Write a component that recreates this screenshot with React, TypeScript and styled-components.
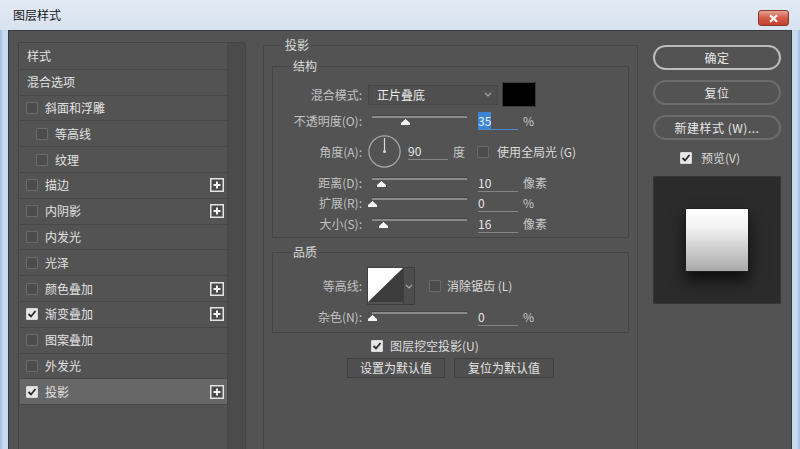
import React from "react";
import styled, { createGlobalStyle } from "styled-components";

const GlobalStyle = createGlobalStyle`
  html, body {
    margin: 0;
    padding: 0;
    background: #535353;
    overflow: hidden;
  }
  body {
    font-family: "Noto Sans CJK SC", "Noto Sans", sans-serif;
    font-size: 12px;
  }
`;

const Window = styled.div`
  width: 800px;
  height: 449px;
  display: flex;
  flex-direction: column;
  overflow: hidden;
  background: linear-gradient(90deg, #9fbbdc 0, #c6daf0 3px, #c6daf0 797px, #9fbbdc 800px);
`;

const TitleBar = styled.div`
  height: 30px;
  flex-shrink: 0;
  display: flex;
  align-items: flex-start;
  justify-content: space-between;
  padding: 0 11px 0 13px;
  background: linear-gradient(#e2eaf4, #d8e3f0);
`;

const Title = styled.span`
  margin-top: 7px;
  line-height: 16px;
  color: #151515;
  font-size: 12px;
`;

const CloseButton = styled.div`
  margin-top: 10px;
  width: 31px;
  height: 16px;
  box-sizing: border-box;
  border: 1px solid #84372c;
  border-radius: 3px;
  background: linear-gradient(#e8a394, #d4604c 45%, #c2402e);
  display: flex;
  align-items: center;
  justify-content: center;
`;

const Body = styled.div`
  flex: 1;
  min-height: 0;
  display: flex;
  margin: 0 8px;
  background: #535353;
  border: 1px solid #3b3b3b;
  border-bottom: none;
  padding: 11px 10px 0 9px;
`;

/* ---------- left style list ---------- */

const LeftPanel = styled.div`
  width: 228px;
  box-sizing: border-box;
  display: flex;
  border: 1px solid #444;
  border-bottom: none;
`;

const StyleList = styled.div`
  flex: 1;
  padding: 1px 0 0 1px;
  display: flex;
  flex-direction: column;
`;

const ScrollColumn = styled.div`
  width: 17px;
  background: #4b4b4b;
  border-left: 1px solid #464646;
`;

const StyleRow = styled.div<{ $indent?: boolean; $plain?: boolean; $active?: boolean }>`
  display: flex;
  align-items: center;
  height: 24.8px;
  border-bottom: 1px solid #474747;
  padding-left: ${(p) => (p.$plain ? 7 : p.$indent ? 16 : 6)}px;
  background: ${(p) => (p.$active ? "#676767" : "transparent")};
  color: #e2e2e2;
  line-height: 16px;
`;

const RowText = styled.span<{ $gap?: boolean }>`
  margin-left: ${(p) => (p.$gap ? 7 : 0)}px;
`;

const PlusBox = styled.span`
  margin-left: auto;
  margin-right: 3px;
  display: flex;
`;

/* ---------- shared bits ---------- */

const Box = styled.span<{ $checked?: boolean }>`
  width: 12px;
  height: 12px;
  box-sizing: border-box;
  flex-shrink: 0;
  border: 1px solid ${(p) => (p.$checked ? "#d6d6d6" : "#6a6a6a")};
  background: ${(p) => (p.$checked ? "#e6e6e6" : "#4c4c4c")};
  border-radius: 1px;
  display: inline-flex;
  align-items: center;
  justify-content: center;
`;

function Checkbox({ checked }: { checked?: boolean }) {
  return (
    <Box $checked={checked}>
      {checked && (
        <svg width="10" height="10" viewBox="0 0 10 10">
          <polyline points="1.5,5 4,7.5 8.5,2" fill="none" stroke="#2a2a2a" strokeWidth="1.8" />
        </svg>
      )}
    </Box>
  );
}

function PlusIcon() {
  return (
    <svg width="14" height="14" viewBox="0 0 14 14">
      <rect x="0.75" y="0.75" width="12.5" height="12.5" fill="#4a4a4a" stroke="#e4e4e4" strokeWidth="1.5" />
      <path d="M7 3.5v7M3.5 7h7" stroke="#f2f2f2" strokeWidth="2" />
    </svg>
  );
}

function Chevron() {
  return (
    <svg width="8" height="5" viewBox="0 0 8 5">
      <polyline points="1,1 4,4 7,1" fill="none" stroke="#a8a8a8" strokeWidth="1.1" />
    </svg>
  );
}

/* ---------- middle settings ---------- */

const MiddleCol = styled.div`
  width: 375px;
  margin-left: 17px;
  display: flex;
  flex-direction: column;
`;

const OuterGroup = styled.fieldset`
  flex: 1;
  min-width: 0;
  margin: -4px 0 0;
  padding: 7px 8px 0;
  border: 1px solid #454545;
  border-bottom: none;
`;

const Group = styled.fieldset<{ $mt?: number; $pb: number }>`
  min-width: 0;
  margin: ${(p) => p.$mt ?? 0}px 0 0;
  padding: 0 0 ${(p) => p.$pb}px;
  border: 1px solid #454545;
`;

const Legend = styled.legend<{ $ml: number }>`
  margin-left: ${(p) => p.$ml}px;
  padding: 0 2px;
  line-height: 14px;
  color: #dadada;
  font-size: 12px;
`;

const FieldRow = styled.div<{ $h: number; $mt?: number }>`
  display: flex;
  align-items: center;
  height: ${(p) => p.$h}px;
  margin-top: ${(p) => p.$mt ?? 0}px;
  line-height: 16px;
`;

const Label = styled.span`
  width: 89px;
  flex-shrink: 0;
  text-align: right;
  white-space: nowrap;
  color: #c2c2c2;
`;

const Select = styled.div`
  margin-left: 6px;
  width: 130px;
  height: 20px;
  box-sizing: border-box;
  border: 1px solid #464646;
  background: #4f4f4f;
  display: flex;
  align-items: center;
  justify-content: space-between;
  padding: 0 5px 0 8px;
  color: #ececec;
`;

const Swatch = styled.div`
  margin-left: 4px;
  width: 34px;
  height: 25px;
  box-sizing: border-box;
  background: #000;
  border: 1px solid #3a3a3a;
`;

const SliderWrap = styled.div`
  position: relative;
  margin-left: 10px;
  width: 95px;
  height: 20px;
  flex-shrink: 0;
`;

const Track = styled.div`
  position: absolute;
  left: 0;
  right: 0;
  top: 4px;
  height: 2px;
  background: #8a8a8a;
  border-top: 1px solid #454545;
`;

const Thumb = styled.svg`
  position: absolute;
  top: 7px;
`;

function Slider({ pos }: { pos: number }) {
  return (
    <SliderWrap>
      <Track />
      <Thumb width="11" height="8" viewBox="0 0 11 8" style={{ left: pos * 95 - 5.5 }}>
        <polygon points="5.5,0.5 10.5,5 10.5,7.5 0.5,7.5 0.5,5" fill="#f4f4f4" stroke="#222" strokeWidth="0.6" />
      </Thumb>
    </SliderWrap>
  );
}

const NumInput = styled.div<{ $focus?: boolean; $ml: number }>`
  margin-left: ${(p) => p.$ml}px;
  width: 40px;
  height: 16px;
  flex-shrink: 0;
  border-bottom: 1px solid ${(p) => (p.$focus ? "#4a88cf" : "#858585")};
  color: #e6e6e6;
  line-height: 16px;
`;

const Selected = styled.span`
  background: #3d84d2;
  color: #eaf3ff;
`;

const Unit = styled.span`
  margin-left: 5px;
  color: #c8c8c8;
`;

const Dial = styled.svg`
  margin-left: 6px;
  flex-shrink: 0;
`;

const CheckLabel = styled.span<{ $ml: number }>`
  margin-left: ${(p) => p.$ml}px;
  color: #dcdcdc;
  white-space: nowrap;
`;

const Spacer = styled.span<{ $w: number }>`
  width: ${(p) => p.$w}px;
  flex-shrink: 0;
`;

const ContourPicker = styled.div`
  margin-left: 5px;
  display: flex;
  height: 36px;
  border: 1px solid #3e3e3e;
`;

const ContourDrop = styled.div`
  width: 10px;
  background: #4d4d4d;
  border-left: 1px solid #3e3e3e;
  display: flex;
  align-items: center;
  justify-content: center;
`;

const KnockRow = styled.div`
  display: flex;
  align-items: center;
  height: 16px;
  margin-top: 5px;
  padding-left: 99px;
  line-height: 16px;
`;

const ButtonRow = styled.div`
  display: flex;
  justify-content: center;
  gap: 9px;
  margin-top: 4px;
`;

const FlatButton = styled.button<{ $w: number }>`
  width: ${(p) => p.$w}px;
  height: 20px;
  padding: 0;
  border: 1px solid #3f3f3f;
  background: #4f4f4f;
  color: #e4e4e4;
  font-family: inherit;
  font-size: 12px;
  line-height: 16px;
`;

/* ---------- right column ---------- */

const RightCol = styled.div`
  width: 128px;
  margin-left: 15px;
  padding-top: 3px;
  display: flex;
  flex-direction: column;
  gap: 10px;
`;

const PillButton = styled.button<{ $primary?: boolean }>`
  height: 25px;
  padding: 0;
  border-radius: 13px;
  border: ${(p) => (p.$primary ? "2px solid #bcbcbc" : "2px solid #6c6c6c")};
  background: #535353;
  color: #e8e8e8;
  font-family: inherit;
  font-size: 12px;
  letter-spacing: 0.5px;
`;

const PreviewRow = styled.div`
  display: flex;
  align-items: center;
  height: 16px;
  padding-left: 27px;
  line-height: 16px;
`;

const PreviewBox = styled.div`
  width: 128px;
  height: 128px;
  box-sizing: border-box;
  background: #2b2b2b;
  border: 1px solid #363636;
  display: flex;
  align-items: center;
  justify-content: center;
`;

const PreviewSquare = styled.div`
  width: 64px;
  height: 64px;
  box-sizing: border-box;
  border: 1px solid #1e1e1e;
  background: linear-gradient(#ffffff 0%, #f2f2f2 30%, #a9a9a9 100%);
  box-shadow: 0 9px 14px rgba(0, 0, 0, 0.65);
`;

const styleItems = [
  { text: "样式", plain: true },
  { text: "混合选项", plain: true },
  { text: "斜面和浮雕" },
  { text: "等高线", indent: true },
  { text: "纹理", indent: true },
  { text: "描边", plus: true },
  { text: "内阴影", plus: true },
  { text: "内发光" },
  { text: "光泽" },
  { text: "颜色叠加", plus: true },
  { text: "渐变叠加", plus: true, checked: true },
  { text: "图案叠加" },
  { text: "外发光" },
  { text: "投影", plus: true, checked: true, active: true },
];

export default function App() {
  return (
    <>
      <GlobalStyle />
      <Window>
        <TitleBar>
          <Title>图层样式</Title>
          <CloseButton>
            <svg width="11" height="9" viewBox="0 0 11 9">
              <path d="M2 1.2l7 6.6M9 1.2l-7 6.6" stroke="#fff" strokeWidth="2.2" />
            </svg>
          </CloseButton>
        </TitleBar>
        <Body>
          <LeftPanel>
            <StyleList>
              {styleItems.map((it) => (
                <StyleRow key={it.text} $plain={it.plain} $indent={it.indent} $active={it.active}>
                  {!it.plain && <Checkbox checked={it.checked} />}
                  <RowText $gap={!it.plain}>{it.text}</RowText>
                  {it.plus && (
                    <PlusBox>
                      <PlusIcon />
                    </PlusBox>
                  )}
                </StyleRow>
              ))}
            </StyleList>
            <ScrollColumn />
          </LeftPanel>

          <MiddleCol>
            <OuterGroup>
              <Legend $ml={11}>投影</Legend>
              <Group $pb={3}>
                <Legend $ml={18}>结构</Legend>
                <FieldRow $h={27} $mt={8}>
                  <Label>混合模式:</Label>
                  <Select>
                    <span>正片叠底</span>
                    <Chevron />
                  </Select>
                  <Swatch />
                </FieldRow>
                <FieldRow $h={22} $mt={2}>
                  <Label>不透明度(O):</Label>
                  <Slider pos={0.35} />
                  <NumInput $ml={11} $focus>
                    <Selected>35</Selected>
                  </NumInput>
                  <Unit>%</Unit>
                </FieldRow>
                <FieldRow $h={33} $mt={3}>
                  <Label>角度(A):</Label>
                  <Dial width="33" height="33" viewBox="0 0 33 33">
                    <circle cx="16.5" cy="16.5" r="15.6" fill="none" stroke="#a9a9a9" strokeWidth="1.2" />
                    <path d="M16.5 16.5V3" stroke="#d8d8d8" strokeWidth="1.2" />
                    <circle cx="16.5" cy="16.5" r="1.5" fill="#d8d8d8" />
                  </Dial>
                  <NumInput $ml={7}>90</NumInput>
                  <Unit>度</Unit>
                  <Spacer $w={12} />
                  <Checkbox />
                  <CheckLabel $ml={8}>使用全局光 (G)</CheckLabel>
                </FieldRow>
                <FieldRow $h={20} $mt={5}>
                  <Label>距离(D):</Label>
                  <Slider pos={0.1} />
                  <NumInput $ml={11}>10</NumInput>
                  <Unit>像素</Unit>
                </FieldRow>
                <FieldRow $h={20}>
                  <Label>扩展(R):</Label>
                  <Slider pos={0} />
                  <NumInput $ml={11}>0</NumInput>
                  <Unit>%</Unit>
                </FieldRow>
                <FieldRow $h={20} $mt={1}>
                  <Label>大小(S):</Label>
                  <Slider pos={0.12} />
                  <NumInput $ml={11}>16</NumInput>
                  <Unit>像素</Unit>
                </FieldRow>
              </Group>

              <Group $mt={7} $pb={5}>
                <Legend $ml={18}>品质</Legend>
                <FieldRow $h={36} $mt={9}>
                  <Label>等高线:</Label>
                  <ContourPicker>
                    <svg width="35" height="34" viewBox="0 0 35 34">
                      <rect width="35" height="34" fill="#3c3c3c" />
                      <polygon points="0,0 35,0 0,34" fill="#ffffff" />
                    </svg>
                    <ContourDrop>
                      <Chevron />
                    </ContourDrop>
                  </ContourPicker>
                  <Spacer $w={14} />
                  <Checkbox />
                  <CheckLabel $ml={6}>消除锯齿 (L)</CheckLabel>
                </FieldRow>
                <FieldRow $h={20} $mt={3}>
                  <Label>杂色(N):</Label>
                  <Slider pos={0} />
                  <NumInput $ml={11}>0</NumInput>
                  <Unit>%</Unit>
                </FieldRow>
              </Group>

              <KnockRow>
                <Checkbox checked />
                <CheckLabel $ml={7}>图层挖空投影(U)</CheckLabel>
              </KnockRow>
              <ButtonRow>
                <FlatButton $w={98}>设置为默认值</FlatButton>
                <FlatButton $w={100}>复位为默认值</FlatButton>
              </ButtonRow>
            </OuterGroup>
          </MiddleCol>

          <RightCol>
            <PillButton $primary>确定</PillButton>
            <PillButton>复位</PillButton>
            <PillButton>新建样式 (W)...</PillButton>
            <PreviewRow>
              <Checkbox checked />
              <CheckLabel $ml={9}>预览(V)</CheckLabel>
            </PreviewRow>
            <PreviewBox>
              <PreviewSquare />
            </PreviewBox>
          </RightCol>
        </Body>
      </Window>
    </>
  );
}
